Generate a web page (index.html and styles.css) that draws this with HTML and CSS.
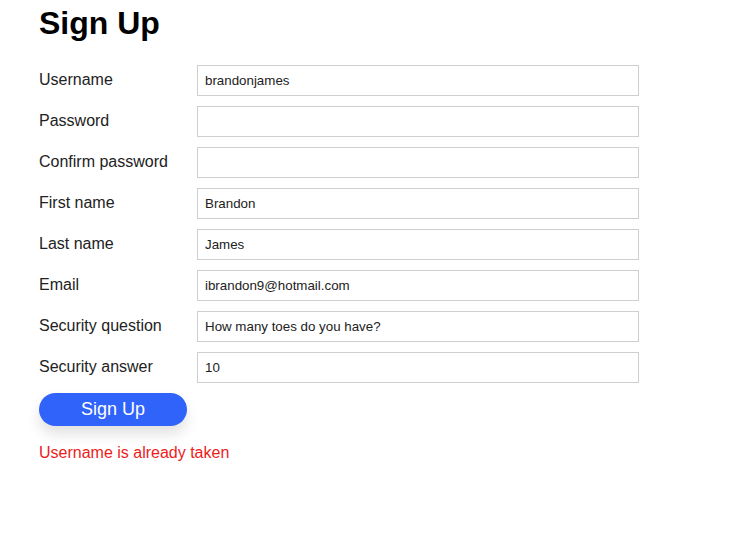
FILE: index.html
```html
<!DOCTYPE html>
<html>
<head>
<meta charset="utf-8">
<link rel="stylesheet" href="styles.css">
</head>
<body>
<div class="page">
  <h1 class="title">Sign Up</h1>
  <form class="form">
    <div class="row"><label class="label">Username</label><input class="field" type="text" value="brandonjames"></div>
    <div class="row"><label class="label">Password</label><input class="field" type="password" value=""></div>
    <div class="row"><label class="label">Confirm password</label><input class="field" type="password" value=""></div>
    <div class="row"><label class="label">First name</label><input class="field" type="text" value="Brandon"></div>
    <div class="row"><label class="label">Last name</label><input class="field" type="text" value="James"></div>
    <div class="row"><label class="label">Email</label><input class="field" type="text" value="ibrandon9@hotmail.com"></div>
    <div class="row"><label class="label">Security question</label><input class="field" type="text" value="How many toes do you have?"></div>
    <div class="row"><label class="label">Security answer</label><input class="field" type="text" value="10"></div>
    <button class="submit" type="button">Sign Up</button>
    <p class="error">Username is already taken</p>
  </form>
</div>
</body>
</html>
```
FILE: styles.css
```css
html, body {
  margin: 0;
  padding: 0;
  background: #fff;
}
body {
  font-family: "Liberation Sans", Arial, sans-serif;
  color: #111;
}
.page {
  padding: 5px 0 0 39px;
}
.title {
  margin: 0;
  font-size: 32px;
  font-weight: bold;
  line-height: 37px;
  color: #000;
}
.form {
  margin-top: 23px;
  display: flex;
  flex-direction: column;
  align-items: flex-start;
  gap: 10px;
}
.row {
  display: flex;
  align-items: center;
}
.label {
  width: 158px;
  font-size: 16px;
  color: #222;
  margin-top: -1px;
}
.field {
  box-sizing: border-box;
  width: 442px;
  height: 31px;
  margin: 0;
  border: 1px solid #cfcfcf;
  border-radius: 0;
  padding: 0 7px;
  font-family: "Liberation Sans", Arial, sans-serif;
  font-size: 13.333px;
  color: #222;
  background: #fff;
  outline: none;
}
.submit {
  margin-top: 0;
  width: 148px;
  height: 33px;
  border: none;
  border-radius: 17px;
  background: #2f63fa;
  color: #fff;
  font-family: "Liberation Sans", Arial, sans-serif;
  font-size: 18px;
  box-shadow: 0 8px 14px rgba(0, 0, 0, 0.12);
  padding: 0;
}
.error {
  margin: 7px 0 0;
  font-size: 16px;
  color: #ec1c1c;
  line-height: 20px;
}
```
